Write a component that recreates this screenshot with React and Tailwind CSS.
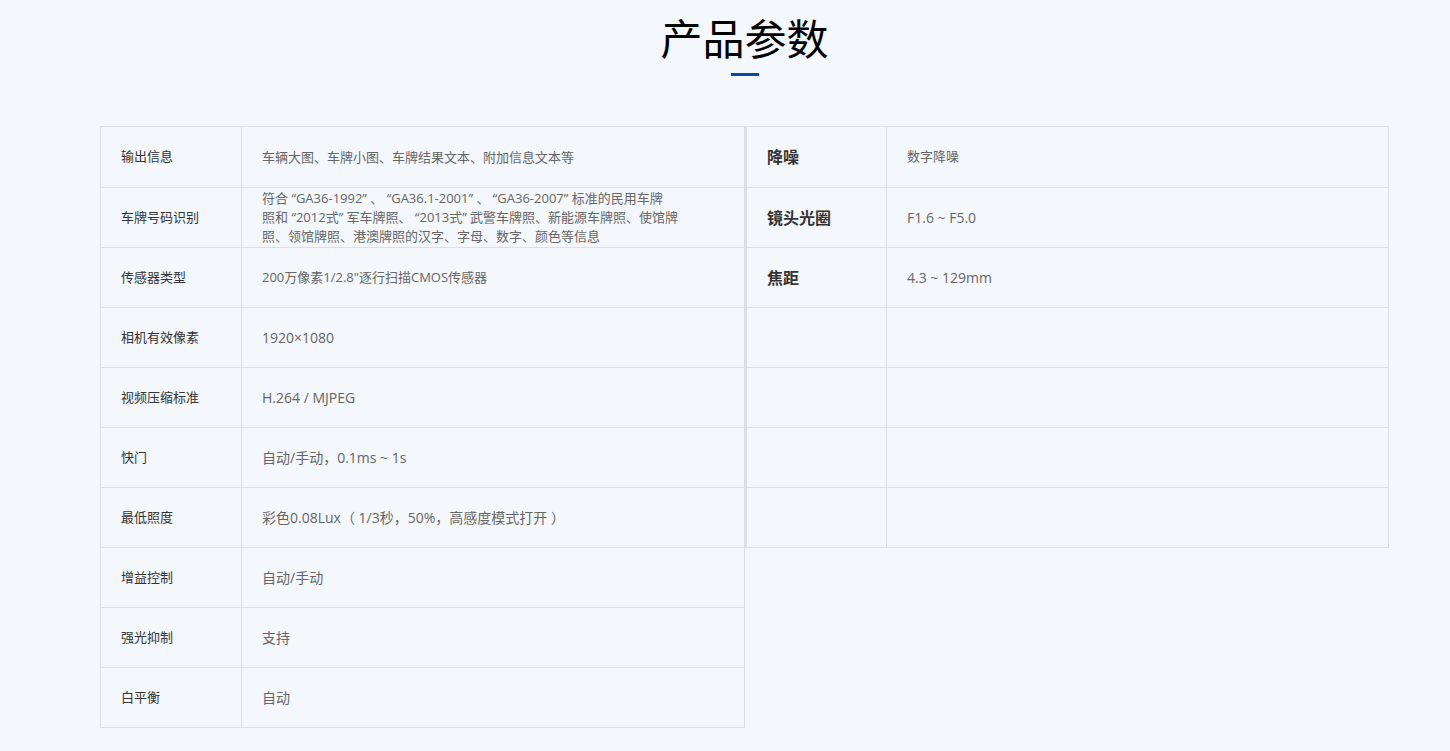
const left = [
  ['输出信息', '车辆大图、车牌小图、车牌结果文本、附加信息文本等', true],
  ['车牌号码识别', '符合 “GA36-1992” 、 “GA36.1-2001” 、 “GA36-2007” 标准的民用车牌\n照和  “2012式” 军车牌照、 “2013式” 武警车牌照、新能源车牌照、使馆牌\n照、领馆牌照、港澳牌照的汉字、字母、数字、颜色等信息', true],
  ['传感器类型', '200万像素1/2.8"逐行扫描CMOS传感器', true],
  ['相机有效像素', '1920×1080'],
  ['视频压缩标准', 'H.264 / MJPEG'],
  ['快门', '自动/手动，0.1ms ~ 1s'],
  ['最低照度', '彩色0.08Lux（ 1/3秒，50%，高感度模式打开 ）'],
  ['增益控制', '自动/手动'],
  ['强光抑制', '支持'],
  ['白平衡', '自动'],
];

const right = [
  ['降噪', '数字降噪', true],
  ['镜头光圈', 'F1.6 ~ F5.0'],
  ['焦距', '4.3 ~ 129mm'],
  ['', ''],
  ['', ''],
  ['', ''],
  ['', ''],
];

const font = { fontFamily: '"Open Sans", "Noto Sans CJK SC", sans-serif' };

export default function App() {
  return (
    <div style={font} className="min-h-[751px] w-full bg-[#f4f7fb]">
      <div className="ml-[100px] w-[1289px]">
        <div className="flex flex-col items-center pt-[14px]">
          <h2 className="text-[42px] leading-[50px] text-black">产品参数</h2>
          <div className="mt-[9px] h-[3px] w-[28px] bg-[#0d4a9e]" />
        </div>
        <div className="mt-[50px] flex items-start">
          <div className="w-[645px] shrink-0 border border-[#dcdfe3]">
            {left.map(([k, v, small], i) => (
              <div key={i} className={`flex h-[60px] ${i ? 'border-t border-[#dcdfe3]' : ''}`}>
                <div className="flex w-[141px] shrink-0 items-center border-r border-[#dcdfe3] pl-[20px] text-[13px] text-[#333]">{k}</div>
                <div className={`flex items-center whitespace-pre-line pl-[20px] text-[#666] ${small ? 'text-[13px] leading-[19px]' : 'text-[14px]'}`}>{v}</div>
              </div>
            ))}
          </div>
          <div className="w-[644px] shrink-0 border border-l-2 border-[#dcdfe3]">
            {right.map(([k, v, small], i) => (
              <div key={i} className={`flex h-[60px] ${i ? 'border-t border-[#dcdfe3]' : ''}`}>
                <div className="flex w-[140px] shrink-0 items-center border-r border-[#dcdfe3] pl-[20px] text-[16px] font-bold text-[#333]">{k}</div>
                <div className={`flex items-center pl-[20px] text-[#666] ${small ? 'text-[13px]' : 'text-[14px]'}`}>{v}</div>
              </div>
            ))}
          </div>
        </div>
      </div>
    </div>
  );
}
